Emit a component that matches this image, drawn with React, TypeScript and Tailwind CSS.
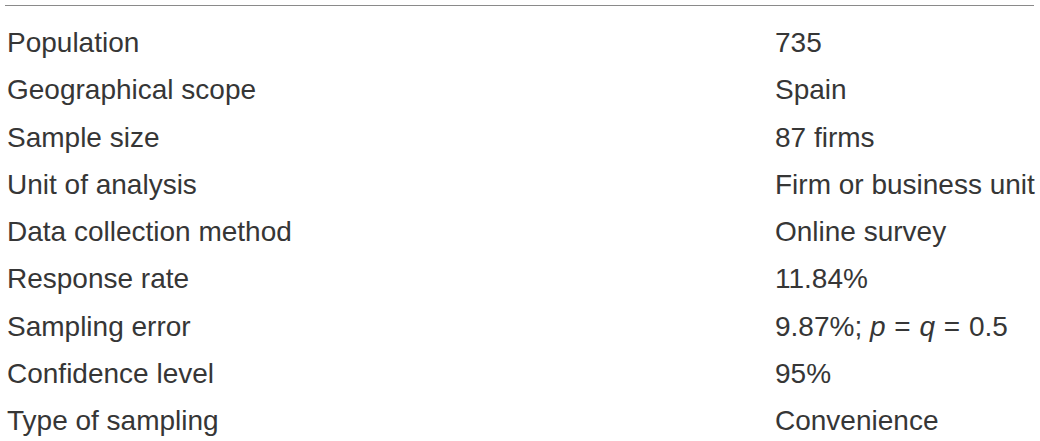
import React from 'react';

const rows: { label: string; value: React.ReactNode }[] = [
  { label: 'Population', value: '735' },
  { label: 'Geographical scope', value: 'Spain' },
  { label: 'Sample size', value: '87 firms' },
  { label: 'Unit of analysis', value: 'Firm or business unit' },
  { label: 'Data collection method', value: 'Online survey' },
  { label: 'Response rate', value: '11.84%' },
  {
    label: 'Sampling error',
    value: (
      <>
        9.87%; <i>p</i> <span className="px-[1px]">=</span> <i>q</i> <span className="px-[1px]">=</span> 0.5
      </>
    ),
  },
  { label: 'Confidence level', value: '95%' },
  { label: 'Type of sampling', value: 'Convenience' },
];

export default function App() {
  return (
    <div className="w-[1040px] h-[441px] bg-white overflow-hidden pt-[5px] pl-[5px] pr-[6px] font-['Liberation_Sans',Arial,sans-serif] text-[#363636]">
      <div className="border-t-[1.5px] border-[#8a8a8a] pt-[13px]">
        {rows.map((r) => (
          <div key={r.label} className="grid grid-cols-[770px_1fr] h-[47.25px] leading-[47px] text-[28px] whitespace-nowrap">
            <div className="pl-[2px]">{r.label}</div>
            <div>{r.value}</div>
          </div>
        ))}
      </div>
    </div>
  );
}
